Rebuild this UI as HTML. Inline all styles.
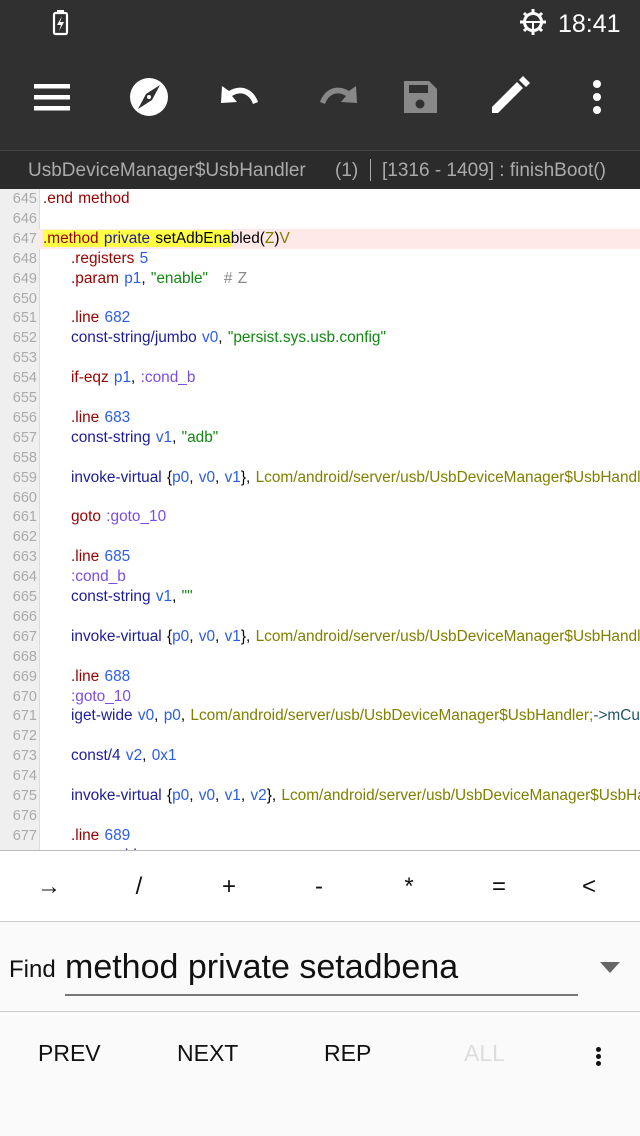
<!DOCTYPE html>
<html><head><meta charset="utf-8"><style>
*{margin:0;padding:0;box-sizing:border-box}
body{width:640px;height:1136px;overflow:hidden;background:#fafafa;font-family:"Liberation Sans",sans-serif;position:relative}
.top{position:absolute;left:0;top:0;width:640px;height:150px;background:#303030}
.sub{position:absolute;left:0;top:150px;width:640px;height:39px;background:#2b2b2b;border-top:1px solid #444;color:#aaa;font-size:19px;line-height:40px;white-space:nowrap}
.code{position:absolute;left:0;top:189px;width:640px;height:661px;background:#fff;overflow:hidden}
.gut{position:absolute;left:0;top:0;width:40px;height:661px;background:#efefef;border-right:1px solid #ddd}
.ln{position:absolute;left:0;width:640px;height:20px;font-size:15.4px;line-height:20px;white-space:nowrap;word-spacing:1px}
.ln b{font-weight:normal;position:absolute;left:0;width:37px;text-align:right;color:#aaa;font-size:14.5px}
.ln i{font-style:normal;position:absolute;left:43px}
.ln i.in{left:71px}
.d{color:#990000}.o{color:#1c1c9c}.r{color:#2a5ce8}.s{color:#118811}.c{color:#808000}.l{color:#7a4de8}.m{color:#888}.t{color:#225566}
.hl{background:#ffff44}
.keys{position:absolute;left:0;top:850px;width:640px;height:72px;background:#fff;border-top:1px solid #bbb;border-bottom:1px solid #ccc}
.keys span{position:absolute;top:22px;font-size:24px;color:#111;width:40px;text-align:center}
.find{position:absolute;left:0;top:922px;width:640px;height:90px;background:#fafafa;border-bottom:1px solid #ccc}
.btns{position:absolute;left:0;top:1012px;width:640px;height:124px;background:#fafafa}
.btns span{position:absolute;top:28px;font-size:23px;color:#111}
</style></head><body>
<div class="top">
<svg width="640" height="150" viewBox="0 0 640 150">
<rect x="54" y="13" width="13" height="21" rx="1.5" fill="none" stroke="#fff" stroke-width="2.2"/><rect x="57" y="10" width="7" height="3" fill="#fff"/>
<path d="M62 16 L57 25 L61 25 L59 31 L64 22 L60 22 Z" fill="#fff"/>
<g transform="translate(533,22)"><circle r="8.5" fill="none" stroke="#fff" stroke-width="3"/><path d="M-8 0 H8 M0 0 V8" stroke="#fff" stroke-width="2"/>
<g stroke="#fff" stroke-width="3"><path d="M0 -13 V-9 M0 13 V9 M-13 0 H-9 M13 0 H9 M-9 -9 L-6.5 -6.5 M9 9 L6.5 6.5 M-9 9 L-6.5 6.5 M9 -9 L6.5 -6.5"/></g></g>
<text x="558" y="32" fill="#fff" font-size="25" font-family="Liberation Sans">18:41</text>
<g fill="#fff"><rect x="34" y="84" width="36" height="4.5"/><rect x="34" y="95" width="36" height="4.5"/><rect x="34" y="106" width="36" height="4.5"/></g>
<ellipse cx="149" cy="97" rx="19" ry="19" fill="#fff"/><path d="M160 85 L152 100 L138 109 L146 94 Z" fill="#303030"/><circle cx="149" cy="97" r="2" fill="#fff"/>
<path d="M229 91 C240 84 253 88 258 102 L253 104 C249 93 240 91 232 96 L237 102 L221 103 L222 86 Z" fill="#fff"/>
<path d="M349 91 C338 84 325 88 320 102 L325 104 C329 93 338 91 346 96 L341 102 L357 103 L356 86 Z" fill="#888"/>
<path d="M404 81 H429 L437 89 V113 H404 Z" fill="#888"/><rect x="409" y="85" width="19" height="8" fill="#303030"/><circle cx="420" cy="104" r="4.5" fill="#303030"/>
<path d="M492 107 L517 82 L523 88 L498 113 H492 Z" fill="#fff"/><path d="M519 80 L523 76 L530 83 L526 87 Z" fill="#fff"/>
<g fill="#fff"><circle cx="597" cy="84" r="4"/><circle cx="597" cy="97" r="4"/><circle cx="597" cy="110" r="4"/></g>
</svg></div>
<div class="sub"><span style="position:absolute;left:28px">UsbDeviceManager$UsbHandler</span><span style="position:absolute;left:335px">(1)</span><span style="position:absolute;left:370px;top:8px;width:1px;height:22px;background:#aaa"></span><span style="position:absolute;left:382px">[1316 - 1409] : finishBoot()</span></div>
<div class="code"><div class="gut"></div>
<div class="ln" style="top:0"><b>645</b><i><span class="d">.end method</span></i></div>
<div class="ln" style="top:19.9px"><b>646</b></div>
<div class="ln" style="top:39.8px;background:#ffe8e8"><b style="background:#efefef">647</b><i><span class="hl"><span class="d">.method</span> <span class="o">private</span> setAdbEna</span>bled(<span class="c">Z</span>)<span class="c">V</span></i></div>
<div class="ln" style="top:59.7px"><b>648</b><i class="in"><span class="d">.registers</span> <span class="r">5</span></i></div>
<div class="ln" style="top:79.6px"><b>649</b><i class="in"><span class="d">.param</span> <span class="r">p1</span>, <span class="s">"enable"</span>&nbsp;&nbsp; <span class="m"># Z</span></i></div>
<div class="ln" style="top:99.5px"><b>650</b></div>
<div class="ln" style="top:119.4px"><b>651</b><i class="in"><span class="d">.line</span> <span class="r">682</span></i></div>
<div class="ln" style="top:139.3px"><b>652</b><i class="in"><span class="o">const-string/jumbo</span> <span class="r">v0</span>, <span class="s">"persist.sys.usb.config"</span></i></div>
<div class="ln" style="top:159.2px"><b>653</b></div>
<div class="ln" style="top:179.1px"><b>654</b><i class="in"><span class="d">if-eqz</span> <span class="r">p1</span>, <span class="l">:cond_b</span></i></div>
<div class="ln" style="top:199px"><b>655</b></div>
<div class="ln" style="top:218.9px"><b>656</b><i class="in"><span class="d">.line</span> <span class="r">683</span></i></div>
<div class="ln" style="top:238.8px"><b>657</b><i class="in"><span class="o">const-string</span> <span class="r">v1</span>, <span class="s">"adb"</span></i></div>
<div class="ln" style="top:258.7px"><b>658</b></div>
<div class="ln" style="top:278.6px"><b>659</b><i class="in"><span class="o">invoke-virtual</span> {<span class="r">p0</span>, <span class="r">v0</span>, <span class="r">v1</span>}, <span class="c">Lcom/android/server/usb/UsbDeviceManager$UsbHandler;-&gt;setEnabledFunctions</span></i></div>
<div class="ln" style="top:298.5px"><b>660</b></div>
<div class="ln" style="top:318.4px"><b>661</b><i class="in"><span class="d">goto</span> <span class="l">:goto_10</span></i></div>
<div class="ln" style="top:338.3px"><b>662</b></div>
<div class="ln" style="top:358.2px"><b>663</b><i class="in"><span class="d">.line</span> <span class="r">685</span></i></div>
<div class="ln" style="top:378.1px"><b>664</b><i class="in"><span class="l">:cond_b</span></i></div>
<div class="ln" style="top:398px"><b>665</b><i class="in"><span class="o">const-string</span> <span class="r">v1</span>, <span class="s">""</span></i></div>
<div class="ln" style="top:417.9px"><b>666</b></div>
<div class="ln" style="top:437.8px"><b>667</b><i class="in"><span class="o">invoke-virtual</span> {<span class="r">p0</span>, <span class="r">v0</span>, <span class="r">v1</span>}, <span class="c">Lcom/android/server/usb/UsbDeviceManager$UsbHandler;-&gt;setEnabledFunctions</span></i></div>
<div class="ln" style="top:457.7px"><b>668</b></div>
<div class="ln" style="top:477.6px"><b>669</b><i class="in"><span class="d">.line</span> <span class="r">688</span></i></div>
<div class="ln" style="top:497.5px"><b>670</b><i class="in"><span class="l">:goto_10</span></i></div>
<div class="ln" style="top:517.4px"><b>671</b><i class="in"><span class="o">iget-wide</span> <span class="r">v0</span>, <span class="r">p0</span>, <span class="c">Lcom/android/server/usb/UsbDeviceManager$UsbHandler;</span><span class="t">-&gt;mCurrentFunctions</span></i></div>
<div class="ln" style="top:537.3px"><b>672</b></div>
<div class="ln" style="top:557.2px"><b>673</b><i class="in"><span class="o">const/4</span> <span class="r">v2</span>, <span class="r">0x1</span></i></div>
<div class="ln" style="top:577.1px"><b>674</b></div>
<div class="ln" style="top:597px"><b>675</b><i class="in"><span class="o">invoke-virtual</span> {<span class="r">p0</span>, <span class="r">v0</span>, <span class="r">v1</span>, <span class="r">v2</span>}, <span class="c">Lcom/android/server/usb/UsbDeviceManager$UsbHandler;-&gt;x</span></i></div>
<div class="ln" style="top:616.9px"><b>676</b></div>
<div class="ln" style="top:636.8px"><b>677</b><i class="in"><span class="d">.line</span> <span class="r">689</span></i></div>
<div class="ln" style="top:656.7px"><b>678</b><i class="in"><span class="o">move-wide</span></i></div>
</div>
<div class="keys"><span style="left:29px">→</span><span style="left:119px">/</span><span style="left:209px">+</span><span style="left:299px">-</span><span style="left:389px">*</span><span style="left:479px">=</span><span style="left:569px">&lt;</span></div>
<div class="find"><span style="position:absolute;left:9px;top:34px;font-size:24px;color:#111">Find</span><span style="position:absolute;left:65px;top:26px;font-size:34px;color:#111">method private setadbena</span><div style="position:absolute;left:65px;top:72px;width:513px;height:2px;background:#777"></div><svg style="position:absolute;left:598px;top:38px" width="24" height="14"><path d="M2 2 H22 L12 13 Z" fill="#666"/></svg></div>
<div class="btns"><span style="left:38px">PREV</span><span style="left:177px">NEXT</span><span style="left:324px">REP</span><span style="left:464px;color:#ddd">ALL</span>
<div style="position:absolute;left:596px;top:35px;width:5px;height:5px;border-radius:50%;background:#111"></div><div style="position:absolute;left:596px;top:42px;width:5px;height:5px;border-radius:50%;background:#111"></div><div style="position:absolute;left:596px;top:49px;width:5px;height:5px;border-radius:50%;background:#111"></div></div>
</body></html>
